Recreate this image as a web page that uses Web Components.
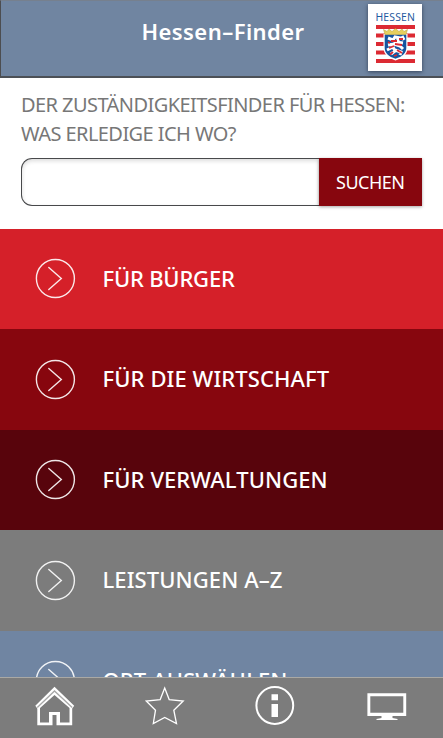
<!DOCTYPE html>
<html lang="de">
<head>
<meta charset="utf-8">
<meta name="viewport" content="width=device-width, initial-scale=1">
<title>Hessen-Finder</title>
<style>
  body {
    margin: 0;
    background: #fff;
    font-family: "Noto Sans", "Open Sans", sans-serif;
  }
</style>
</head>
<body>
<finder-app>
  <finder-header slot="header">Hessen–Finder</finder-header>
  <finder-search action="SUCHEN">DER ZUSTÄNDIGKEITSFINDER FÜR HESSEN:<br>WAS ERLEDIGE ICH WO?</finder-search>
  <finder-link style="--row-color: #d52029; --tracking: -0.2px">FÜR BÜRGER</finder-link>
  <finder-link style="--row-color: #87060e">FÜR DIE WIRTSCHAFT</finder-link>
  <finder-link style="--row-color: #58040c">FÜR VERWALTUNGEN</finder-link>
  <finder-link style="--row-color: #7c7c7c">LEISTUNGEN A–Z</finder-link>
  <finder-link style="--row-color: #7085a2">ORT AUSWÄHLEN</finder-link>
  <finder-tabs slot="tabs"></finder-tabs>
</finder-app>

<script>
class FinderApp extends HTMLElement {
  constructor() {
    super();
    this.attachShadow({ mode: 'open' });
  }

  connectedCallback() {
    this.shadowRoot.innerHTML = `
      <style>
        :host {
          display: flex;
          flex-direction: column;
          height: 738px;
          overflow: hidden;
        }
        main {
          flex: 1;
          min-height: 0;
          overflow: hidden;
        }
      </style>
      <slot name="header"></slot>
      <main><slot></slot></main>
      <slot name="tabs"></slot>
    `;
  }
}

class FinderHeader extends HTMLElement {
  constructor() {
    super();
    this.attachShadow({ mode: 'open' });
  }

  connectedCallback() {
    this.shadowRoot.innerHTML = `
      <style>
        :host {
          display: grid;
          grid-template-columns: 75px 1fr 75px;
          flex: none;
          box-sizing: border-box;
          height: 78px;
          background: #7085a1;
          border-left: 1.5px solid #4c4d50;
          border-top: 1px solid #76808e;
          border-bottom: 2px solid #4c5056;
        }
        h1 {
          grid-column: 2;
          margin: 15px 0 0;
          padding-left: 2px;
          color: #fff;
          font-size: 22px;
          font-weight: 600;
          line-height: 30px;
          letter-spacing: 0.45px;
          text-align: center;
          white-space: nowrap;
        }
        hessen-logo {
          margin-top: 3px;
        }
      </style>
      <h1><slot></slot></h1>
      <hessen-logo></hessen-logo>
    `;
  }
}

class HessenLogo extends HTMLElement {
  constructor() {
    super();
    this.attachShadow({ mode: 'open' });
  }

  connectedCallback() {
    this.shadowRoot.innerHTML = `
      <style>
        :host {
          display: block;
          width: 54px;
          height: 67px;
          background: #fff;
          box-shadow: 0 1px 4px rgba(20, 30, 50, 0.65);
        }
        svg {
          display: block;
        }
        text {
          font: 10.4px "Noto Sans", sans-serif;
          fill: #1f5aa0;
        }
      </style>
      <svg width="54" height="67" viewBox="0 0 54 67">
        <text x="7.4" y="17" textLength="39.6">HESSEN</text>
        <path fill="#dc2a33" d="M8 21h39v4H8zM8 29.5h39v4H8zM8 38h39v4H8zM8 46.5h39v4H8zM8 55h39v4H8z"/>
        <!-- shield -->
        <path fill="#fff" d="M15.5 30h24v14c0 6-5 10-12 12.500c-7-2.500-12-6.500-12-12.500z"/>
        <path fill="#1555a0" d="M16.700 30.500h21.600v13.500c0 5-4 8.700-10.800 10.700c-6.800-2-10.800-5.700-10.800-10.700z"/>
        <!-- lion -->
        <path fill="none" stroke="#fff" stroke-width="3" d="M20 34l5 2 2-3 5 1-4 4 7 1M20 41l6-1 6 2 3 3M19 46l6-3 2 4-4 3M27 46l6 2-1 3M34 32l2 4"/>
        <path fill="none" stroke="#dc2a33" stroke-width="1.800" d="M23 37l6 0M27 40l7 1M21 44l5-2M29 46l5 3M25 48l-3 2.500M31 35h4M20 38l2 1M26 52l3-1"/>
        <!-- crown -->
        <path fill="#e6cf5d" stroke="#b79e3c" stroke-width=".5" d="M17 30.500l-1.500-5 3.500 2 2-2.500 3 2.500 3.500-3 3.500 3 3-2.500 2 2.500 3.500-2-1.500 5z"/>
      </svg>
    `;
  }
}

class FinderSearch extends HTMLElement {
  constructor() {
    super();
    this.attachShadow({ mode: 'open' });
  }

  connectedCallback() {
    this.shadowRoot.innerHTML = `
      <style>
        :host {
          display: block;
          box-sizing: border-box;
          height: 150.5px;
          padding: 12px 21px 0 21px;
          background: #fff;
        }
        p {
          height: 58px;
          margin: 0 0 10px;
          color: #777;
          font-size: 20px;
          line-height: 29px;
          letter-spacing: -0.57px;
          white-space: nowrap;
        }
        form {
          display: flex;
          height: 48px;
        }
        input {
          flex: 1;
          min-width: 0;
          box-sizing: border-box;
          padding: 0 12px;
          border: 1.5px solid #48494b;
          border-right: 0;
          border-radius: 11px 0 0 11px;
          background: #fff;
          box-shadow: inset 0 2px 4px rgba(0, 0, 0, 0.14);
          font: inherit;
          font-size: 18px;
          outline: none;
        }
        button {
          width: 103.5px;
          padding: 0 0 1px;
          border: 0;
          background: #87060e;
          box-shadow: 0 1px 3px rgba(0, 0, 0, 0.35);
          color: #fff;
          font: inherit;
          font-size: 18px;
          letter-spacing: -0.5px;
        }
      </style>
      <p><slot></slot></p>
      <form>
        <input type="text" aria-label="Suche">
        <button type="button">${this.getAttribute('action')}</button>
      </form>
    `;
  }
}

class FinderLink extends HTMLElement {
  constructor() {
    super();
    this.attachShadow({ mode: 'open' });
  }

  connectedCallback() {
    this.shadowRoot.innerHTML = `
      <style>
        :host {
          display: flex;
          align-items: center;
          gap: 26.5px;
          box-sizing: border-box;
          height: 100.5px;
          padding-left: 35px;
          background: var(--row-color);
          color: #fff;
          font-size: 22px;
          font-weight: 500;
          line-height: 30px;
          letter-spacing: var(--tracking, 0.1px);
          white-space: nowrap;
        }
        span {
          padding-bottom: 2px;
        }
        svg {
          flex: none;
          fill: none;
          stroke: #fff;
          stroke-opacity: 0.9;
          stroke-width: 1.4;
          stroke-linecap: round;
        }
      </style>
      <svg width="41" height="41" viewBox="0 0 41 41">
        <circle cx="20.400" cy="20.500" r="19"/>
        <path d="M13.800 9.500L26.300 20.500L13.800 31.500"/>
      </svg>
      <span><slot></slot></span>
    `;
  }
}

class FinderTabs extends HTMLElement {
  constructor() {
    super();
    this.attachShadow({ mode: 'open' });
  }

  connectedCallback() {
    this.shadowRoot.innerHTML = `
      <style>
        :host {
          display: grid;
          grid-template-columns: 110px 110px 112px 40px;
          flex: none;
          box-sizing: border-box;
          height: 61px;
          padding: 8px 0 0 35px;
          border-top: 1px solid #aaa9a5;
          background: #7c7c7c;
        }
        svg {
          display: block;
          fill: none;
          stroke: #fff;
        }
      </style>
      <svg width="40" height="40" viewBox="0 0 40 40">
        <path fill="#fff" stroke="none" d="M19.500 .7L.3 19.700L2.300 22.500V39.300H17.500V29H21.500V39.300H37.200V22.500L39.200 19.700z"/>
        <path fill="#7c7c7c" stroke="none" d="M5 22L19.500 9L34.500 22V36.500H25V26H14V36.500H5z"/>
        <path stroke="#a8a8a8" stroke-width="1.300" d="M2.300 21.500L19.500 5L37.200 21.500"/>
      </svg>
      <svg width="40" height="40" viewBox="0 0 40 40">
        <path stroke-width="1.300" d="M19.700 2L24.200 13.600L38.200 15L28.800 24.200L31.500 37.500L19.700 31.500L8.300 37.500L10.500 24.200L1.200 15L15.200 13.600z"/>
      </svg>
      <svg width="40" height="40" viewBox="0 0 40 40">
        <circle cx="19.800" cy="19.500" r="18.400" stroke-width="2"/>
        <path fill="#fff" stroke="none" d="M16.500 8.200h6.500v6h-6.500zM16.500 18h6.500v13h-6.500z"/>
      </svg>
      <svg width="40" height="40" viewBox="0 0 40 40">
        <path fill="#fff" fill-rule="evenodd" stroke="none" d="M.4 7.300h38.800v22.600H.4zM3.300 10.200v16.600h33V10.200z"/>
        <path fill="#fff" stroke="none" d="M14.500 29.500h11v2.500l5 1v1H9.500v-1l5-1z"/>
      </svg>
    `;
  }
}

customElements.define('finder-app', FinderApp);
customElements.define('hessen-logo', HessenLogo);
customElements.define('finder-header', FinderHeader);
customElements.define('finder-search', FinderSearch);
customElements.define('finder-link', FinderLink);
customElements.define('finder-tabs', FinderTabs);
</script>
</body>
</html>
